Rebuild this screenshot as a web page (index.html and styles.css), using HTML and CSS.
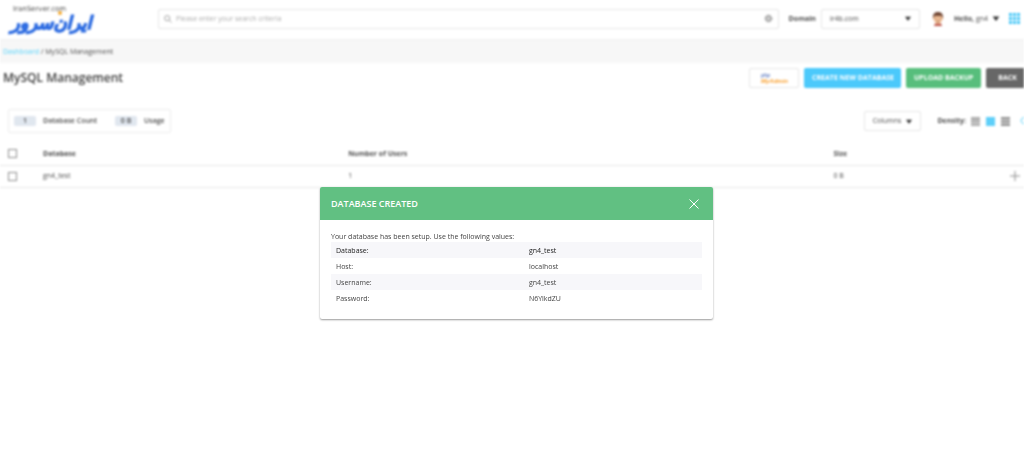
FILE: index.html
```html
<!DOCTYPE html>
<html lang="en">
<head>
<meta charset="utf-8">
<title>MySQL Management</title>
<link rel="stylesheet" href="styles.css">
</head>
<body>
<div class="page">
  <header class="topbar">
    <a class="logo" href="#">
      <span class="logo-domain">IranServer.com</span>
      <span class="logo-name" lang="fa" dir="rtl">ایران‌سرور</span>
      <span class="logo-dot"></span>
    </a>
    <div class="search">
      <svg class="search-icon" viewBox="0 0 10 10"><circle cx="4" cy="4" r="3.2"/><path d="M6.5 6.5 9.4 9.4"/></svg>
      <input class="search-input" type="text" placeholder="Please enter your search criteria" aria-label="Search">
      <svg class="gear" viewBox="0 0 10 10"><circle cx="5" cy="5" r="3"/><circle class="gear-teeth" cx="5" cy="5" r="3.7"/></svg>
    </div>
    <label class="domain-label" for="domain">Domain</label>
    <div class="select domain-select">
      <select id="domain"><option>ir4b.com</option></select>
      <svg class="caret" viewBox="0 0 8 6"><path d="M0 0.5h8L4 6z"/></svg>
    </div>
    <svg class="avatar" viewBox="0 0 12 14">
      <path fill="#b8483c" d="M2 14c0-2 2-3 4-3s4 1 4 3z"/>
      <path fill="#eeb98f" d="M2 4h8v3.500c0 2.500-2 4.500-4 4.500S2 10 2 7.500z"/>
      <circle fill="#eeb98f" cx="1.600" cy="6.500" r="1"/><circle fill="#eeb98f" cx="10.400" cy="6.500" r="1"/>
      <path fill="#6b3f2b" d="M1 5.500C.5 2 3 0 6 0s5.500 2 5 5.500L10 6V4H2v2z"/>
      <path stroke="#7a4a35" stroke-width=".8" d="M3.500 6.700h1M7.500 6.700h1M5 9.700h2"/>
    </svg>
    <button class="user" type="button"><span><b>Hello,</b> gn4</span><svg class="caret" viewBox="0 0 8 6"><path d="M0 0.500h8L4 6z"/></svg></button>
    <button class="apps" type="button" aria-label="Apps">
      <svg viewBox="0 0 11 11"><path d="M0 0h3v3H0zM4 0h3v3H4zM8 0h3v3H8zM0 4h3v3H0zM4 4h3v3H4zM8 4h3v3H8zM0 8h3v3H0zM4 8h3v3H4zM8 8h3v3H8z"/></svg>
    </button>
  </header>
  <nav class="crumbs"><a href="#">Dashboard</a> / MySQL Management</nav>
  <main>
    <div class="heading">
      <h1>MySQL Management</h1>
      <div class="actions">
        <button class="btn btn-pma" type="button" aria-label="phpMyAdmin"><span class="pma"><span class="pma-php">php</span><span class="pma-name">MyAdmin</span></span></button>
        <button class="btn btn-blue" type="button">CREATE NEW DATABASE</button>
        <button class="btn btn-green" type="button">UPLOAD BACKUP</button>
        <button class="btn btn-gray" type="button">BACK</button>
      </div>
    </div>
    <div class="toolbar">
      <div class="stats">
        <span class="badge">1</span><span class="stat-name">Database Count</span>
        <span class="badge">0 B</span><span>Usage</span>
      </div>
      <div class="view">
        <button class="columns" type="button">Columns <svg class="caret" viewBox="0 0 8 6"><path d="M0 0.500h8L4 6z"/></svg></button>
        <span class="density">Density:</span>
        <button class="dens" type="button" aria-label="Compact"><svg viewBox="0 0 9 9"><path d="M0 1h9M0 3.300h9M0 5.600h9M0 8h9" stroke="#8c8c8c" stroke-width="1.500"/></svg></button>
        <button class="dens" type="button" aria-label="Standard"><svg viewBox="0 0 9 9"><path d="M0 0h9v9H0z" fill="#55cdf9"/></svg></button>
        <button class="dens" type="button" aria-label="Comfortable"><svg viewBox="0 0 9 9"><path d="M0 1.200h9M0 4.500h9M0 7.800h9" stroke="#777" stroke-width="2"/></svg></button>
        <button class="refresh" type="button" aria-label="Refresh"><svg viewBox="0 0 8 8"><path d="M6.500 1.800A3 3 0 1 0 7 4.500"/></svg></button>
      </div>
    </div>
    <table class="list">
      <thead><tr>
        <th class="c-check"><input type="checkbox" aria-label="Select all"></th>
        <th class="c-db">Database</th><th class="c-users">Number of Users</th><th>Size</th><th class="c-more"></th>
      </tr></thead>
      <tbody><tr>
        <td><input type="checkbox" aria-label="Select gn4_test"></td>
        <td>gn4_test</td><td>1</td><td>0 B</td>
        <td class="c-more"><button class="more" type="button" aria-label="More"><svg viewBox="0 0 10 10"><path d="M5 0v10M0 5h10"/></svg></button></td>
      </tr></tbody>
    </table>
  </main>
</div>
<div class="overlay">
  <section class="modal" role="dialog" aria-labelledby="modal-title">
    <div class="modal-head">
      <h2 id="modal-title">DATABASE CREATED</h2>
      <button class="close" type="button" aria-label="Close"><svg viewBox="0 0 10 10"><path d="M0.500 0.500l9 9M9.500 0.500l-9 9"/></svg></button>
    </div>
    <div class="modal-body">
      <p>Your database has been setup. Use the following values:</p>
      <table class="values">
        <tr class="strong"><th>Database:</th><td>gn4_test</td></tr>
        <tr><th>Host:</th><td>localhost</td></tr>
        <tr><th>Username:</th><td>gn4_test</td></tr>
        <tr><th>Password:</th><td>N6YlkdZU</td></tr>
      </table>
    </div>
  </section>
</div>
</body>
</html>
```
FILE: styles.css
```css
* { box-sizing: border-box; }
body { margin: 0; min-height: 100vh; background: #fff; color: #444; font: 7px/10px "Open Sans", sans-serif; }
button, input, select { font: inherit; color: inherit; }
button { border: 0; padding: 0; background: none; }
svg { display: block; }
a { color: #4fd0fa; text-decoration: none; }

.page { filter: blur(1px); opacity: 0.94; min-height: 100vh; overflow: hidden; background: #fff; }

.topbar { display: flex; align-items: center; height: 40px; padding: 0 4px 2px 9px; border-bottom: 1px solid #f0f0f0; }
.logo { position: relative; display: flex; flex-direction: column; width: 149px; padding-top: 2px; }
.logo-domain { padding-left: 4px; color: #444; font: 400 7px/7px "DejaVu Sans", sans-serif; }
.logo-name { align-self: flex-start; padding-left: 2px; color: #1f62e0; font: italic 700 18px/20px "DejaVu Sans", sans-serif; -webkit-text-stroke: 1px #1f62e0; }
.logo-dot { position: absolute; left: 49px; top: 7px; width: 4px; height: 4px; border-radius: 50%; background: #f5a623; }
.search { flex: 1; display: flex; align-items: center; height: 20px; padding: 0 5px; border: 1px solid #e6e6e6; border-radius: 2px; }
.search-icon { width: 8px; height: 8px; fill: none; stroke: #888; }
.search-input { flex: 1; min-width: 0; border: 0; padding: 0 4px; outline: 0; background: none; }
.search-input::placeholder { color: #aaa; }
.gear { width: 9px; height: 9px; fill: #ccc; stroke: #888; }
.gear-teeth { fill: none; stroke-dasharray: 2 1; }
.domain-label { margin: 0 5px 0 10px; font-weight: 700; }
.select { display: flex; align-items: center; height: 20px; padding: 0 8px; border: 1px solid #e6e6e6; border-radius: 2px; }
.domain-select { width: 99px; }
.select select { flex: 1; appearance: none; border: 0; padding: 0; background: none; }
.caret { width: 6px; height: 5px; fill: #222; }
.avatar { width: 12px; height: 14px; margin: 0 10px 0 12px; }
.user { display: flex; align-items: center; gap: 4px; margin-right: 9px; }
.user .caret { width: 8px; }
.apps svg { width: 11px; height: 11px; fill: #3cc5f7; }

.crumbs { height: 23px; padding: 7px 3px; background: #f7f7f7; }

.heading { display: flex; align-items: center; justify-content: space-between; margin: 5px -5px 0 3px; }
h1 { margin: 0; font: 600 12px/20px "Open Sans", sans-serif; color: #333; }
.actions { display: flex; gap: 5px; }
.btn { height: 20px; padding: 0 8px; border-radius: 2px; color: #fff; font-weight: 700; white-space: nowrap; }
.btn-pma { width: 50px; border: 1px solid #e6e6e6; }
.pma { display: flex; flex-direction: column; padding-left: 3px; text-align: left; font: italic 700 6px/6px "Liberation Sans", sans-serif; }
.pma-php { color: #5a78c0; font-size: 5px; line-height: 5px; }
.pma-name { color: #f8981d; }
.btn-blue { width: 97px; background: #40c6fb; }
.btn-green { width: 75px; background: #4dbb74; }
.btn-gray { width: 43px; background: #5e5e5e; }

.toolbar { display: flex; justify-content: space-between; align-items: center; margin: 21px -4px 0 8px; }
.stats { display: flex; align-items: center; height: 24px; padding: 0 5px; border: 1px solid #ededed; border-radius: 2px; font-weight: 600; }
.badge { width: 22px; margin-right: 7px; border-radius: 2px; background: #dfe6ef; text-align: center; }
.stat-name { margin-right: 18px; }
.view { display: flex; align-items: center; }
.columns { display: flex; align-items: center; gap: 5px; height: 20px; margin-right: 16px; padding: 0 8px; border: 1px solid #e6e6e6; border-radius: 2px; }
.density { margin-right: 5px; font-weight: 700; }
.dens { margin-right: 6px; }
.dens svg { width: 9px; height: 9px; }
.refresh { margin-left: 4px; }
.refresh svg { width: 8px; height: 8px; fill: none; stroke: #4fd0fa; }

.list { width: 100%; margin-top: 10px; border-collapse: collapse; table-layout: fixed; }
.list th, .list td { height: 22px; padding: 0; border-bottom: 1px solid #e6e6e6; text-align: left; }
.list th { font-weight: 700; }
.c-check { width: 43px; }
.c-db { width: 29.8%; }
.c-users { width: 47.4%; }
.list .c-more { width: 5%; padding-right: 4px; }
.list input { display: block; appearance: none; width: 9px; height: 9px; margin: 0 0 0 8px; border: 1px solid #8a8a8a; }
.more { display: block; margin-left: auto; }
.more svg { width: 10px; height: 10px; fill: none; stroke: #888; }

.overlay { position: fixed; inset: 0; display: flex; justify-content: center; align-items: center; padding: 50px 0 0 9px; }
.modal { width: 393px; border-radius: 2px; background: #fff; box-shadow: 0 1px 2px rgba(0, 0, 0, 0.4); }
.modal-head { display: flex; justify-content: space-between; align-items: center; height: 33px; padding: 0 14px 0 11px; border-radius: 2px 2px 0 0; background: #61c082; color: #fff; }
h2 { margin: 0; font: 600 9px/12px "Open Sans", sans-serif; }
.close svg { width: 10px; height: 10px; fill: none; stroke: #fff; stroke-width: 1; }
.modal-body { padding: 11px 11px 13px; }
p { margin: 0; line-height: 11px; }
.values { width: 100%; border-collapse: collapse; }
.values th, .values td { height: 16px; padding: 1px 5px 0; font-weight: 400; text-align: left; }
.values th { width: 52%; }
.values tr:nth-child(odd) { background: #f7f7fa; }
.values .strong th, .values .strong td { color: #222; }
```
